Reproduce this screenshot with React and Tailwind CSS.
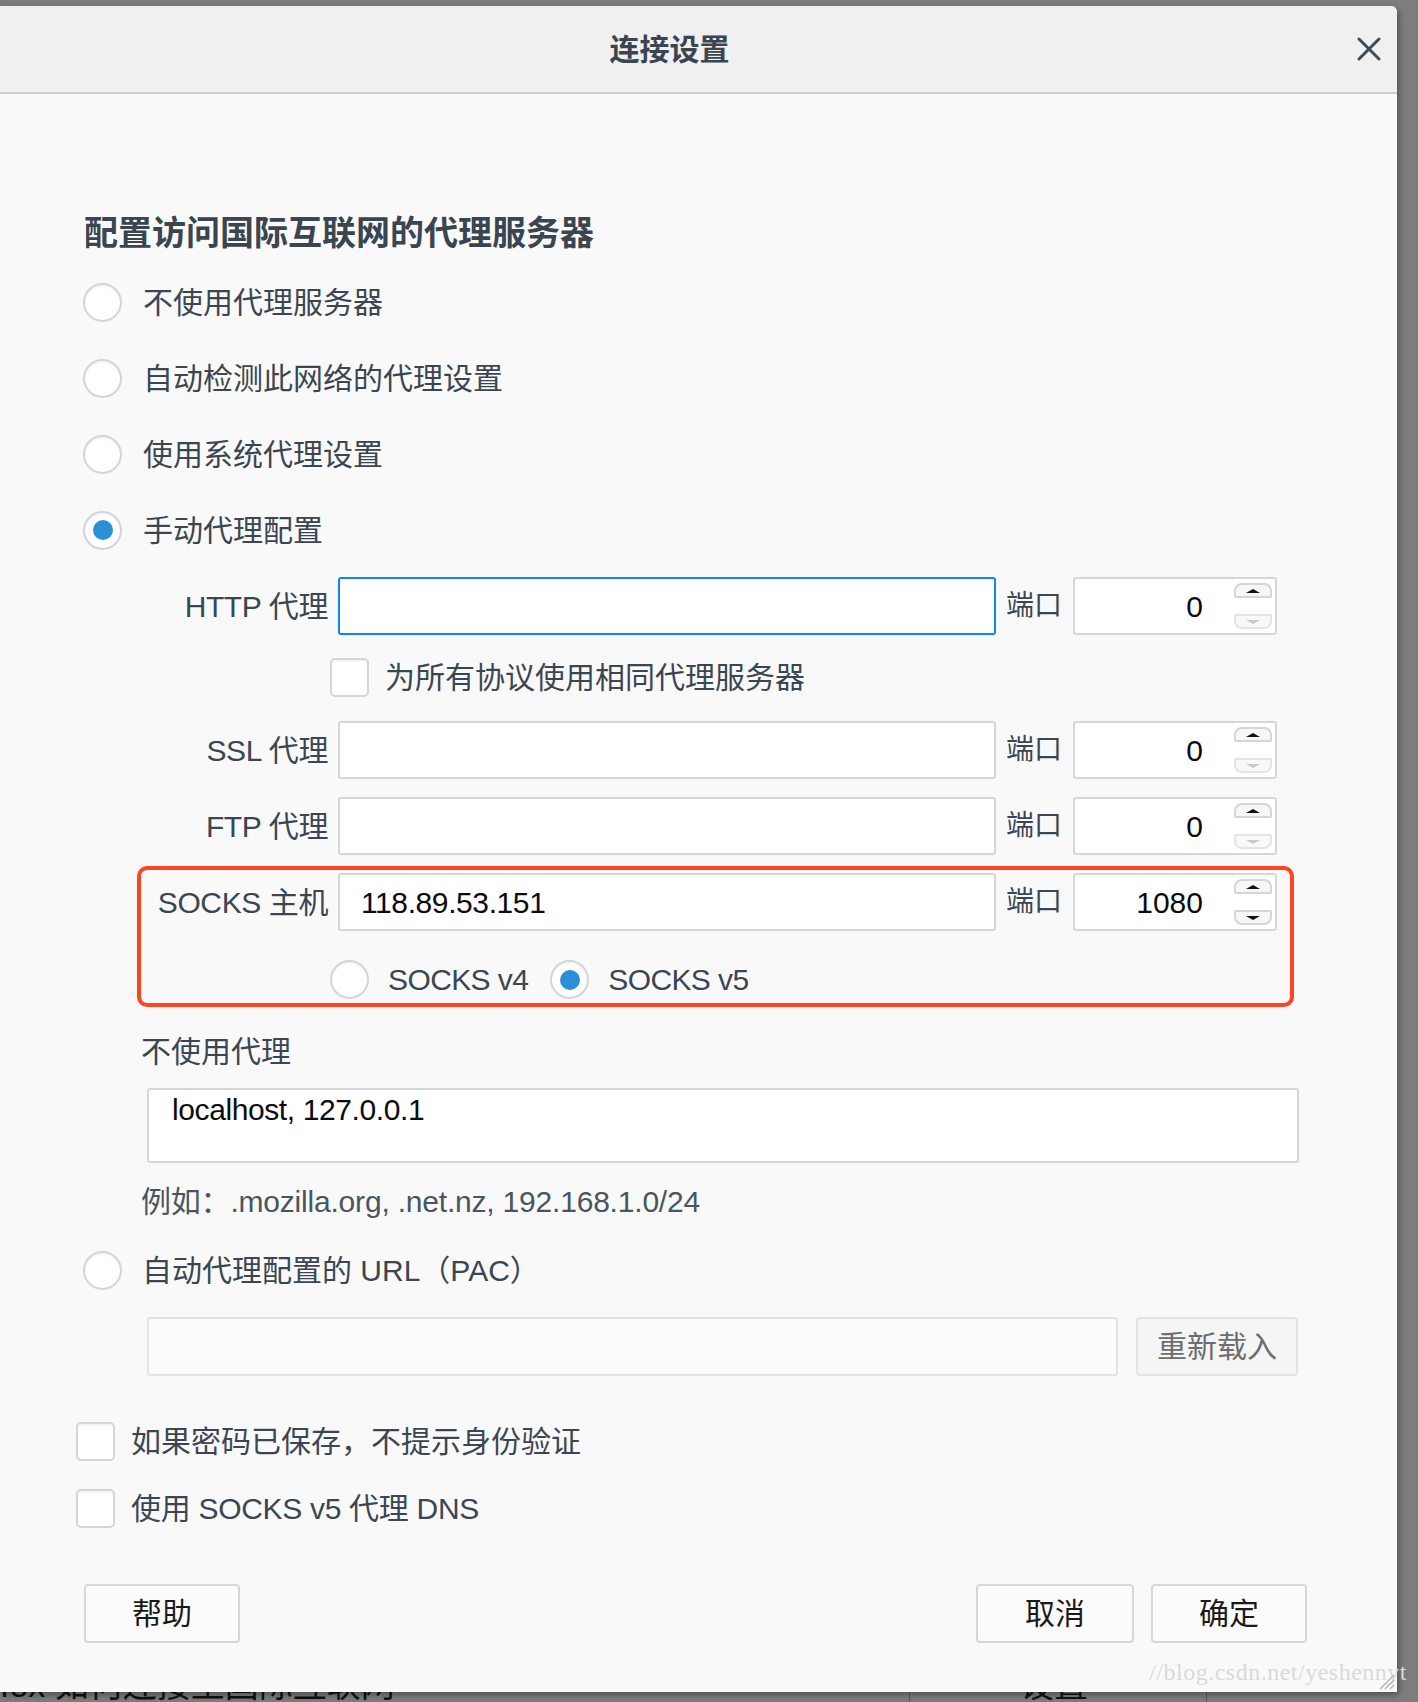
import { X } from "lucide-react";

const Radio = ({ checked }) => (
  <div className="flex h-[39px] w-[39px] shrink-0 items-center justify-center rounded-full border-2 border-[#d4d4d9] bg-white shadow-[inset_0_2px_1px_rgba(0,0,0,0.04)]">
    {checked && <div className="h-[20px] w-[20px] rounded-full bg-[#2a8fd6]" />}
  </div>
);

const Checkbox = () => (
  <div className="h-[39px] w-[39px] shrink-0 rounded-[5px] border-2 border-[#d4d4d9] bg-white shadow-[inset_0_2px_1px_rgba(0,0,0,0.04)]" />
);

const Arrow = ({ disabled }) => (
  <svg width="14" height="4" viewBox="0 0 14 4">
    <path d="M0 4 L7 0 L14 4 Z" fill={disabled ? "#c9c9cc" : "#111"} />
  </svg>
);

const ArrowDown = ({ disabled }) => (
  <svg width="14" height="4" viewBox="0 0 14 4">
    <path d="M0 0 L7 4 L14 0 Z" fill={disabled ? "#c9c9cc" : "#111"} />
  </svg>
);

const Spinner = ({ downDisabled }) => (
  <div className="flex h-[46px] w-[38px] flex-col justify-between">
    <div className="flex h-[15px] items-center justify-center rounded-t-[8px] rounded-b-[2px] border-2 border-[#d5d5da] bg-[#f7f7f7]">
      <Arrow />
    </div>
    <div
      className={`flex h-[15px] items-center justify-center rounded-t-[2px] rounded-b-[8px] border-2 ${
        downDisabled ? "border-[#e4e4e7] bg-[#f9f9f9]" : "border-[#d5d5da] bg-[#f7f7f7]"
      }`}
    >
      <ArrowDown disabled={downDisabled} />
    </div>
  </div>
);

const ProxyRow = ({ label, value, port, focused }) => (
  <div className="flex h-[58px] items-center pl-[150px]">
    <div className="mr-[10px] w-[178px] whitespace-nowrap text-right text-[30px] tracking-[-0.4px] text-[#3b4652]">
      {label}
    </div>
    <div
      className={`flex h-[58px] w-[658px] items-center rounded-[3px] border-2 bg-white pl-[21px] text-[30px] tracking-[-0.4px] text-[#0c0c0d] ${
        focused ? "border-[#0a84ff]" : "border-[#d7d7db]"
      }`}
    >
      {value}
    </div>
    <span className="ml-[10px] w-[58px] whitespace-nowrap text-[28px] text-[#3b4652]">端口</span>
    <div className="ml-[9px] flex h-[58px] w-[204px] items-center rounded-[3px] border-2 border-[#d7d7db] bg-white">
      <span className="flex-1 text-right text-[30px] text-[#0c0c0d]">{port}</span>
      <div className="ml-[31px] mr-[3px]">
        <Spinner downDisabled={port === "0"} />
      </div>
    </div>
  </div>
);

const options = ["不使用代理服务器", "自动检测此网络的代理设置", "使用系统代理设置", "手动代理配置"];

const Button = ({ children, className }) => (
  <div
    className={`flex h-[59px] items-center justify-center rounded-[4px] border-2 border-[#d7d7db] bg-[#fbfbfb] text-[30px] text-[#1a1a1a] ${className}`}
  >
    {children}
  </div>
);

export default function App() {
  return (
    <div className="h-[1702px] w-[1418px] overflow-hidden bg-[#7d7d7d] pt-[6px] font-['Liberation_Sans','Noto_Sans_CJK_SC',sans-serif]">
      <div className="relative flex h-[1686px] w-[1397px] flex-col rounded-tr-[6px] bg-[#f9f9fa] shadow-[2px_3px_6px_rgba(0,0,0,0.35)]">
        {/* header */}
        <div className="relative flex h-[88px] shrink-0 items-center justify-center rounded-tr-[6px] border-b-2 border-[#cdcdcf] bg-[#f0f0f0] pr-[58px]">
          <span className="text-[30px] font-semibold text-[#3a4550]">连接设置</span>
          <X className="absolute right-[8px] top-[23px] h-[40px] w-[40px] text-[#3d4a57]" strokeWidth={1.8} />
        </div>

        <h1 className="ml-[84px] mt-[119px] text-[34px] font-bold leading-[40px] text-[#3a4550]">
          配置访问国际互联网的代理服务器
        </h1>

        <div className="mt-[11px] flex flex-col pl-[83px]">
          {options.map((label, index) => (
            <div key={label} className="flex h-[76px] items-center gap-[21px]">
              <Radio checked={index === 3} />
              <span className="text-[30px] text-[#3b4652]">{label}</span>
            </div>
          ))}
        </div>

        <div className="mt-[9px]">
          <ProxyRow label="HTTP 代理" value="" port="0" focused />
        </div>

        <div className="mt-[23px] flex h-[39px] items-center gap-[16px] pl-[330px]">
          <Checkbox />
          <span className="text-[30px] text-[#3b4652]">为所有协议使用相同代理服务器</span>
        </div>

        <div className="mt-[24px]">
          <ProxyRow label="SSL 代理" value="" port="0" />
        </div>
        <div className="mt-[18px]">
          <ProxyRow label="FTP 代理" value="" port="0" />
        </div>

        <div className="relative mt-[18px]">
          <ProxyRow label="SOCKS 主机" value="118.89.53.151" port="1080" />
          <div className="mt-[29px] flex h-[39px] items-center pl-[330px]">
            <Radio />
            <span className="ml-[19px] text-[30px] tracking-[-0.6px] text-[#3b4652]">SOCKS v4</span>
            <div className="ml-[22px]">
              <Radio checked />
            </div>
            <span className="ml-[19px] text-[30px] tracking-[-0.6px] text-[#3b4652]">SOCKS v5</span>
          </div>
          <div className="pointer-events-none absolute left-[137px] top-[-7px] h-[141px] w-[1157px] rounded-[10px] border-4 border-[#ff4422]" />
        </div>

        <div className="ml-[141px] mt-[33px] text-[30px] leading-[40px] text-[#3b4652]">不使用代理</div>
        <div className="ml-[147px] mt-[16px] h-[75px] w-[1152px] rounded-[3px] border-2 border-[#d7d7db] bg-white pl-[23px] pt-[1px] text-[30px] leading-[38px] tracking-[-0.4px] text-[#0c0c0d]">
          localhost, 127.0.0.1
        </div>
        <div className="ml-[141px] mt-[19px] text-[30px] leading-[40px] tracking-[-0.2px] text-[#4a5560]">
          例如：.mozilla.org, .net.nz, 192.168.1.0/24
        </div>

        <div className="mt-[28px] flex h-[40px] items-center gap-[20px] pl-[83px]">
          <Radio />
          <span className="text-[30px] text-[#3b4652]">自动代理配置的 URL（PAC）</span>
        </div>

        <div className="mt-[27px] flex items-center pl-[147px]">
          <div className="h-[59px] w-[971px] rounded-[3px] border-2 border-[#e3e3e6] bg-[#fbfbfb]" />
          <div className="ml-[18px] flex h-[59px] w-[162px] items-center justify-center rounded-[4px] border-2 border-[#e3e3e6] bg-[#f5f5f5] text-[30px] text-[#6d6d70]">
            重新载入
          </div>
        </div>

        <div className="mt-[46px] flex h-[39px] items-center gap-[16px] pl-[76px]">
          <Checkbox />
          <span className="text-[30px] text-[#3b4652]">如果密码已保存，不提示身份验证</span>
        </div>
        <div className="mt-[28px] flex h-[39px] items-center gap-[16px] pl-[76px]">
          <Checkbox />
          <span className="text-[30px] tracking-[-0.3px] text-[#3b4652]">使用 SOCKS v5 代理 DNS</span>
        </div>

        <div className="mt-[56px] flex items-center pl-[84px] pr-[90px]">
          <Button className="w-[156px]">帮助</Button>
          <div className="flex-1" />
          <Button className="w-[158px]">取消</Button>
          <Button className="ml-[17px] w-[156px]">确定</Button>
        </div>

        {/* watermark + resize grip */}
        <span className="absolute bottom-[2px] right-[-10px] font-['Liberation_Serif',serif] text-[24px] tracking-[0.5px] text-[#d9d9d9]">
          //blog.csdn.net/yeshennyt
        </span>
        <svg className="absolute bottom-[2px] right-[2px]" width="18" height="18" viewBox="0 0 18 18">
          <path d="M17 3 L3 17 M17 8 L8 17 M17 13 L13 17" stroke="#b5b5b5" strokeWidth="1.5" />
        </svg>
      </div>

      {/* page behind, mostly covered by the dialog */}
      <div className="flex h-[10px] items-end overflow-hidden text-[34px] leading-none text-[#111]">
        <div className="w-[909px] whitespace-nowrap">fox 如何连接至国际互联网</div>
        <div className="flex h-full w-[298px] items-end border-x border-[#555] pl-[110px]">设置</div>
      </div>
    </div>
  );
}
